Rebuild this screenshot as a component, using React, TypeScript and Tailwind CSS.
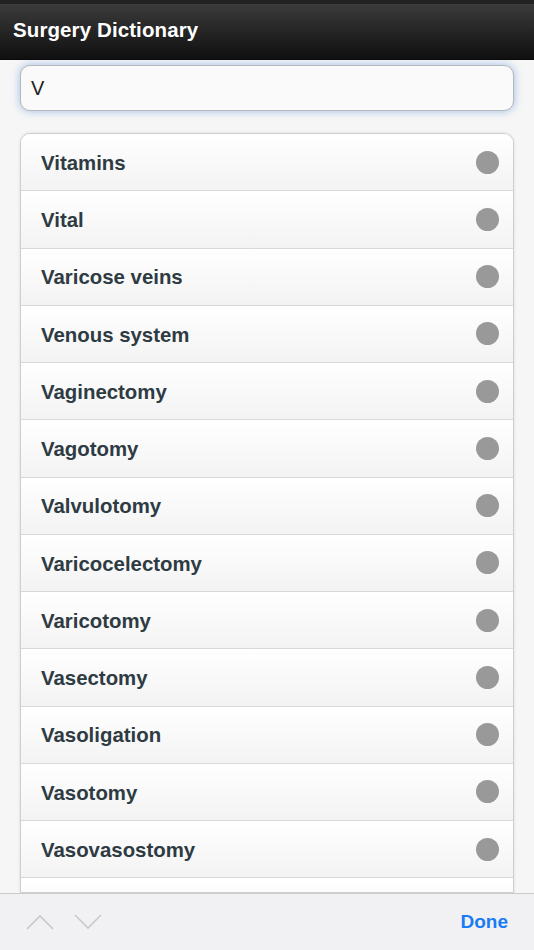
import React from "react";

const items = [
  "Vitamins",
  "Vital",
  "Varicose veins",
  "Venous system",
  "Vaginectomy",
  "Vagotomy",
  "Valvulotomy",
  "Varicocelectomy",
  "Varicotomy",
  "Vasectomy",
  "Vasoligation",
  "Vasotomy",
  "Vasovasostomy",
  "",
];

export default function App() {
  return (
    <div
      className="w-[534px] h-[950px] flex flex-col overflow-hidden bg-[#f6f6f6]"
      style={{ fontFamily: '"Liberation Sans", Arial, sans-serif' }}
    >
      <div className="h-[60px] shrink-0 flex flex-col bg-gradient-to-b from-[#2a2a2a] to-[#111111] border-b border-[#0a0a0a]">
        <div className="h-[4px] bg-[#222222]" />
        <div className="flex-1 flex items-center pl-[13px] pb-[2px] bg-gradient-to-b from-[#3c3c3c] to-[#101010]">
          <span className="text-white font-bold text-[20.5px] tracking-[0.1px]">Surgery Dictionary</span>
        </div>
      </div>
      <div className="flex-1 overflow-hidden flex flex-col px-[20px] pt-[5px]">
        <div className="h-[46px] shrink-0 rounded-[10px] border border-[#b8b8b8] bg-[#fafafa] shadow-[0_0_8px_rgba(80,140,220,0.55)] flex items-center pl-[10px]">
          <span className="text-[20px] text-[#222222]">V</span>
        </div>
        <div className="mt-[22px] rounded-t-[10px] border border-[#cfcfcf] shadow-[0_0_3px_rgba(0,0,0,0.12)] overflow-hidden">
          {items.map((t, i) => (
            <div
              key={i}
              className="h-[57.25px] flex items-center justify-between pl-[20px] pr-[14px] border-b border-[#d8d8d8] bg-gradient-to-b from-[#ffffff] to-[#f3f3f3]"
            >
              <span className="font-bold text-[20.4px] text-[#2e3b43] pt-[2px]">{t}</span>
              {t && <span className="w-[23px] h-[23px] rounded-full bg-[#999999]" />}
            </div>
          ))}
        </div>
      </div>
      <div className="h-[57px] shrink-0 border-t border-[#cbcbcb] bg-[#f1f1f3] flex items-center justify-between pl-[26px] pr-[26px]">
        <div className="flex items-center gap-[20px]">
          <svg width="28" height="16" viewBox="0 0 28 16" fill="none">
            <path d="M1 15 L14 2 L27 15" stroke="#c9c9cc" strokeWidth="1.6" />
          </svg>
          <svg width="28" height="16" viewBox="0 0 28 16" fill="none">
            <path d="M1 1 L14 14 L27 1" stroke="#c9c9cc" strokeWidth="1.6" />
          </svg>
        </div>
        <span className="text-[19px] font-bold text-[#1a7cf5]">Done</span>
      </div>
    </div>
  );
}
